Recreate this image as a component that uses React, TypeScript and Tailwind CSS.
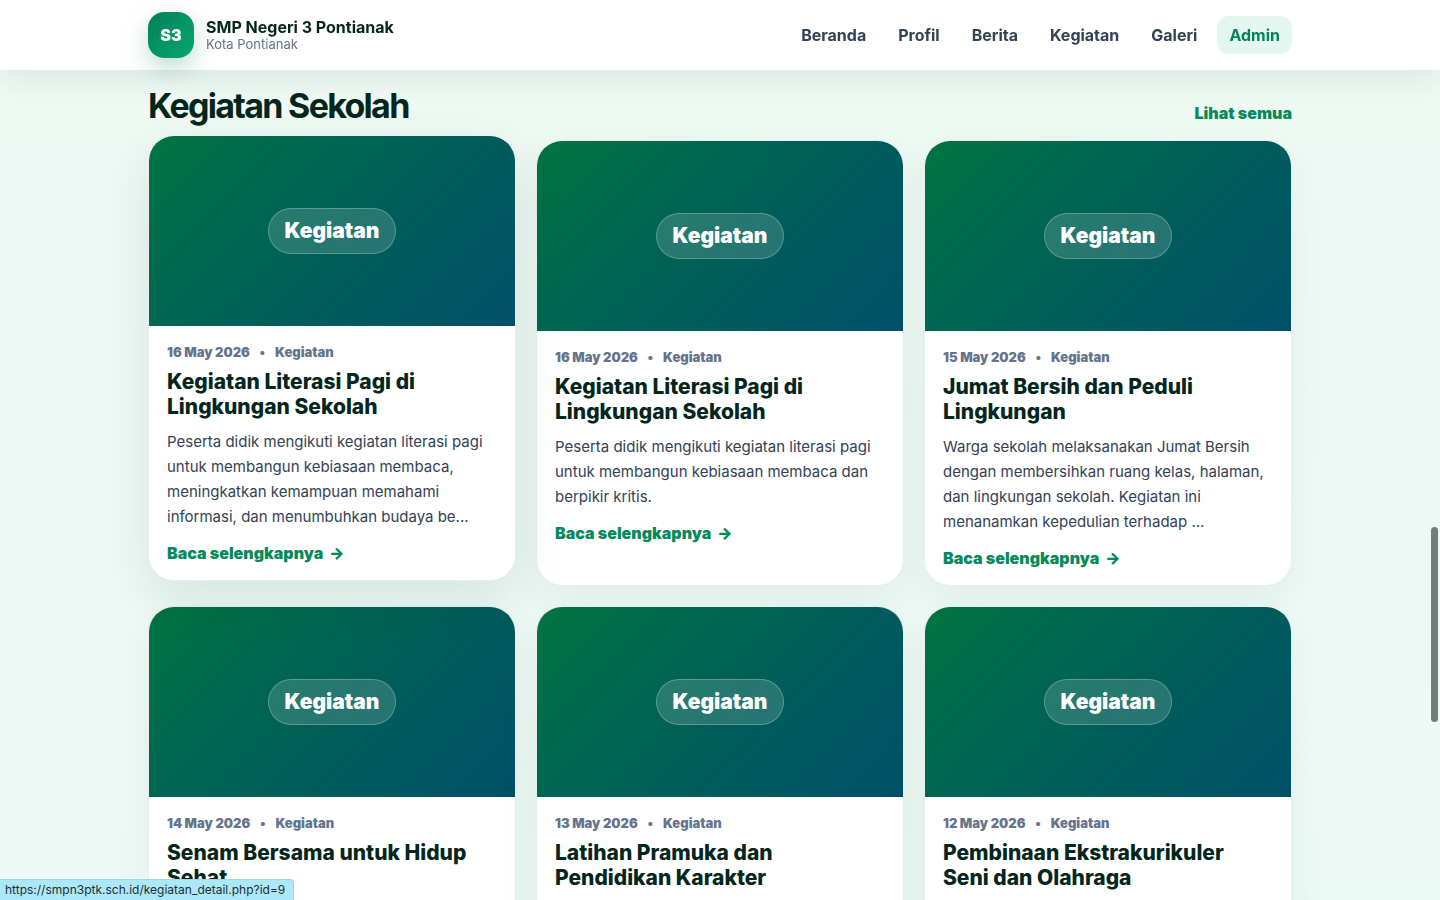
import { clsx } from 'clsx';

const navLinks = [
  { label: 'Beranda', href: '#beranda' },
  { label: 'Profil', href: '#profil' },
  { label: 'Berita', href: '#berita' },
  { label: 'Kegiatan', href: '#kegiatan' },
  { label: 'Galeri', href: '#galeri' },
];

const activities = [
  {
    id: 9,
    date: '16 May 2026',
    title: 'Kegiatan Literasi Pagi di Lingkungan Sekolah',
    excerpt:
      'Peserta didik mengikuti kegiatan literasi pagi untuk membangun kebiasaan membaca, meningkatkan kemampuan memahami informasi, dan menumbuhkan budaya be...',
  },
  {
    id: 8,
    date: '16 May 2026',
    title: 'Kegiatan Literasi Pagi di Lingkungan Sekolah',
    excerpt:
      'Peserta didik mengikuti kegiatan literasi pagi untuk membangun kebiasaan membaca dan berpikir kritis.',
  },
  {
    id: 7,
    date: '15 May 2026',
    title: 'Jumat Bersih dan Peduli Lingkungan',
    excerpt:
      'Warga sekolah melaksanakan Jumat Bersih dengan membersihkan ruang kelas, halaman, dan lingkungan sekolah. Kegiatan ini menanamkan kepedulian terhadap ...',
  },
  { id: 6, date: '14 May 2026', title: 'Senam Bersama untuk Hidup Sehat', excerpt: '' },
  { id: 5, date: '13 May 2026', title: 'Latihan Pramuka dan Pendidikan Karakter', excerpt: '' },
  { id: 4, date: '12 May 2026', title: 'Pembinaan Ekstrakurikuler Seni dan Olahraga', excerpt: '' },
];

type Activity = (typeof activities)[number];

function Header() {
  return (
    <header className="sticky top-0 z-20 bg-white/95 shadow-[0_10px_30px_rgba(2,44,34,0.08)] backdrop-blur-lg">
      <div className="mx-auto flex max-w-[1180px] items-center justify-between px-[18px] py-3">
        <a href="#beranda" className="flex items-center gap-3">
          <span className="flex size-[46px] items-center justify-center rounded-2xl bg-linear-135/srgb from-[#04805a] to-[#05a870] font-black text-white shadow-[0_10px_24px_rgba(4,120,87,0.25)]">
            S3
          </span>
          <span>
            <span className="block leading-[18px] font-bold text-[#04261c]">SMP Negeri 3 Pontianak</span>
            <span className="block text-[13px] leading-4 text-[#64748b]">Kota Pontianak</span>
          </span>
        </a>
        <nav className="flex items-center gap-2 font-bold text-[#334155]">
          {navLinks.map((link) => (
            <a key={link.label} href={link.href} className="rounded-xl px-3 py-[7px]">
              {link.label}
            </a>
          ))}
          <a href="#admin" className="rounded-xl bg-[#e3f7ee] px-3 py-[7px] text-[#04825a]">
            Admin
          </a>
        </nav>
      </div>
    </header>
  );
}

function ActivityCard({ item, raised }: { item: Activity; raised: boolean }) {
  return (
    <article
      className={clsx(
        'overflow-hidden rounded-[26px] border border-[#047857]/10 bg-white',
        raised
          ? '-translate-y-[5px] shadow-[0_18px_50px_rgba(2,44,34,0.10)]'
          : 'shadow-[0_14px_40px_rgba(2,44,34,0.06)]'
      )}
    >
      <div className="flex h-[190px] items-center justify-center bg-linear-135/srgb from-[#007442] via-[#006058] to-[#005068]">
        <span className="rounded-full border border-white/25 bg-white/15 px-4 py-[5px] text-[21px] leading-[34px] font-black text-white">
          Kegiatan
        </span>
      </div>
      <div className="p-[18px]">
        <p className="flex gap-[10px] text-[13px] leading-4 font-black text-[#64748b]">
          <span>{item.date}</span>
          <span>•</span>
          <span>Kegiatan</span>
        </p>
        <h3 className="mt-[9px] text-[21px] leading-[25px] font-extrabold text-[#04261c]">{item.title}</h3>
        <p className="mt-[10px] text-[15px] leading-[25px] text-[#334155]">{item.excerpt}</p>
        <a
          href={`#kegiatan-${item.id}`}
          className="mt-[15px] flex items-center gap-[6px] leading-[18px] font-black text-[#058a5b]"
        >
          Baca selengkapnya <span>→</span>
        </a>
      </div>
    </article>
  );
}

export default function App() {
  return (
    <div className="min-h-screen bg-linear-to-b/srgb from-[#eff9f4] to-[#ecfaf6] font-['Inter','Liberation_Sans',sans-serif]">
      <Header />
      <main className="mx-auto max-w-[1180px] px-[18px] pt-[15px] pb-12">
        <div className="flex items-end justify-between">
          <h2 className="text-[34px] leading-[41px] font-bold tracking-tighter text-[#04261c]">Kegiatan Sekolah</h2>
          <a href="#kegiatan" className="leading-[26px] font-black text-[#058a5b]">
            Lihat semua
          </a>
        </div>
        <div className="mt-[14px] grid grid-cols-3 gap-5">
          {activities.map((item, index) => (
            <ActivityCard key={item.id} item={item} raised={index === 0} />
          ))}
        </div>
      </main>

      {/* link preview and scroll thumb */}
      <div className="fixed bottom-0 left-0 z-30 rounded-tr-[4px] border-t border-r border-[#a5d5df] bg-[#ace9f8] pr-2 pl-[5px] text-xs leading-5 text-[#1f2937]">
        https://smpn3ptk.sch.id/kegiatan_detail.php?id=9
      </div>
      <div className="fixed top-[527px] right-[2px] z-30 h-[195px] w-[7px] rounded-full bg-[#747d79]" />
    </div>
  );
}
